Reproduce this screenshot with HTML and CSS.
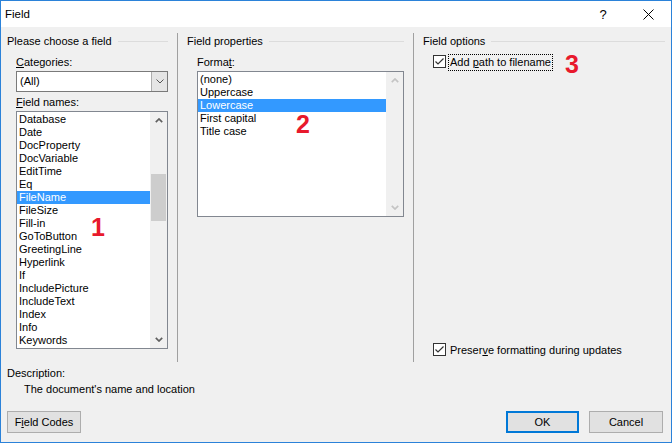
FILE: index.html
```html
<!DOCTYPE html>
<html lang="en">
<head>
<meta charset="utf-8">
<title>Field</title>
<link rel="stylesheet" href="styles.css">
</head>
<body>
<div class="window">
  <div class="titlebar">
    <span class="title">Field</span>
    <span class="cap-btn help">?</span>
    <span class="cap-btn close">
      <svg width="11" height="11" viewBox="0 0 11 11"><path d="M0.5 0.5L10.5 10.5M10.5 0.5L0.5 10.5" stroke="#000" stroke-width="1" fill="none"/></svg>
    </span>
  </div>
  <div class="main">
    <div class="groups">
      <section class="group g1">
        <div class="ghead">Please choose a field</div>
        <div class="gbody">
          <div class="label lbl-cat"><u>C</u>ategories:</div>
          <div class="combo">
            <span class="combo-text">(All)</span>
            <span class="combo-btn">
              <svg width="8" height="5" viewBox="0 0 8 5"><path d="M0.5 0.5L4 4L7.5 0.5" stroke="#555" stroke-width="1" fill="none"/></svg>
            </span>
          </div>
          <div class="label lbl-names"><u>F</u>ield names:</div>
          <div class="listbox lb1">
            <ul class="items">
              <li>Database</li>
              <li>Date</li>
              <li>DocProperty</li>
              <li>DocVariable</li>
              <li>EditTime</li>
              <li>Eq</li>
              <li class="sel">FileName</li>
              <li>FileSize</li>
              <li>Fill-in</li>
              <li>GoToButton</li>
              <li>GreetingLine</li>
              <li>Hyperlink</li>
              <li>If</li>
              <li>IncludePicture</li>
              <li>IncludeText</li>
              <li>Index</li>
              <li>Info</li>
              <li>Keywords</li>
            </ul>
            <div class="vscroll">
              <div class="sb-btn"><svg width="8" height="5" viewBox="0 0 8 5"><path d="M0.8 4.2L4 1L7.2 4.2" stroke="#606060" stroke-width="1.7" fill="none"/></svg></div>
              <div class="sb-track"><div class="thumb"></div></div>
              <div class="sb-btn"><svg width="8" height="5" viewBox="0 0 8 5"><path d="M0.8 0.8L4 4L7.2 0.8" stroke="#606060" stroke-width="1.7" fill="none"/></svg></div>
            </div>
          </div>
        </div>
      </section>
      <section class="group g2">
        <div class="ghead">Field properties</div>
        <div class="gbody">
          <div class="label lbl-fmt">Forma<u>t</u>:</div>
          <div class="listbox lb2">
            <ul class="items">
              <li>(none)</li>
              <li>Uppercase</li>
              <li class="sel">Lowercase</li>
              <li>First capital</li>
              <li>Title case</li>
            </ul>
            <div class="vscroll">
              <div class="sb-btn"><svg width="8" height="5" viewBox="0 0 8 5"><path d="M0.8 4.2L4 1L7.2 4.2" stroke="#c4c4c4" stroke-width="1.7" fill="none"/></svg></div>
              <div class="sb-track"></div>
              <div class="sb-btn"><svg width="8" height="5" viewBox="0 0 8 5"><path d="M0.8 0.8L4 4L7.2 0.8" stroke="#c4c4c4" stroke-width="1.7" fill="none"/></svg></div>
            </div>
          </div>
        </div>
      </section>
      <section class="group g3">
        <div class="ghead">Field options</div>
        <div class="gbody">
          <div class="check-row row-path">
            <span class="cbox"><svg width="11" height="11" viewBox="0 0 11 11"><path d="M1.5 5.5L4 8L9.5 2.5" stroke="#333" stroke-width="1.2" fill="none"/></svg></span>
            <span class="clabel focus">Add <u>p</u>ath to filename</span>
          </div>
          <div class="check-row row-preserve">
            <span class="cbox"><svg width="11" height="11" viewBox="0 0 11 11"><path d="M1.5 5.5L4 8L9.5 2.5" stroke="#333" stroke-width="1.2" fill="none"/></svg></span>
            <span class="clabel">Preser<u>v</u>e formatting during updates</span>
          </div>
        </div>
      </section>
    </div>
    <div class="desc-label">Description:</div>
    <div class="desc-text">The document's name and location</div>
    <div class="buttons">
      <button class="btn btn-codes">F<u>i</u>eld Codes</button>
      <span class="spacer"></span>
      <button class="btn btn-ok">OK</button>
      <button class="btn btn-cancel">Cancel</button>
    </div>
  </div>
  <span class="mark m1">1</span>
  <span class="mark m2">2</span>
  <span class="mark m3">3</span>
</div>
</body>
</html>
```

FILE: styles.css
```css
* { box-sizing: border-box; }
html, body { margin: 0; padding: 0; }
body {
  width: 672px;
  height: 443px;
  overflow: hidden;
  background: #fff;
  font-family: "Liberation Sans", Arial, sans-serif;
  font-size: 11px;
  color: #000;
}
u { text-decoration: underline; text-underline-offset: 1px; }

.window {
  position: relative;
  width: 672px;
  height: 443px;
  border: 1px solid #2b82d9;
  background: #f0f0f0;
  display: flex;
  flex-direction: column;
}

.titlebar {
  flex: none;
  height: 26px;
  background: #fff;
  display: flex;
  align-items: center;
}
.title { flex: 1; padding-left: 4px; font-size: 11.5px; }
.cap-btn {
  width: 46px;
  height: 26px;
  display: flex;
  align-items: center;
  justify-content: center;
}
.help { font-size: 13px; padding-left: 2px; }

.main {
  flex: 1;
  display: flex;
  flex-direction: column;
  padding: 6px 6px 0 6px;
}

.groups {
  display: flex;
  height: 329px;
}
.group { display: flex; flex-direction: column; height: 329px; }
.g1 { width: 161px; }
.g2 { width: 227px; margin-left: 9px; border-left: 1px solid #a0a0a0; padding-left: 9px; }
.g3 { width: 252px; margin-left: 9px; border-left: 1px solid #a0a0a0; padding-left: 9px; }

.ghead {
  display: flex;
  align-items: center;
  height: 16px;
  white-space: nowrap;
}
.ghead::after {
  content: "";
  flex: 1;
  height: 1px;
  background: #dcdcdc;
  margin-left: 6px;
}

.gbody { flex: 1; display: flex; flex-direction: column; padding-left: 9px; }
.g2 .gbody, .g3 .gbody { padding-left: 10px; }

.label { line-height: 16px; height: 16px; white-space: nowrap; }
.lbl-cat, .lbl-fmt { margin-top: 5px; }
.lbl-names { margin-top: 2px; }

.combo {
  margin-top: 1px;
  height: 21px;
  border: 1px solid #7a7a7a;
  background: #fff;
  display: flex;
}
.combo-text { flex: 1; padding-left: 3px; line-height: 19px; }
.combo-btn {
  width: 16px;
  background: #e5e5e5;
  border-left: 1px solid #adadad;
  display: flex;
  align-items: center;
  justify-content: center;
}

.listbox {
  margin-top: 1px;
  border: 1px solid #828790;
  background: #fff;
  display: flex;
}
.lb1 { height: 238px; }
.lb2 { height: 146px; }

.items {
  list-style: none;
  margin: 0;
  padding: 1px 0 0 0;
  flex: 1;
  overflow: hidden;
}
.items li {
  height: 13px;
  line-height: 13px;
  padding-left: 2px;
  white-space: nowrap;
}
.items li.sel { background: #3399ff; color: #fff; }

.vscroll {
  flex: none;
  width: 17px;
  background: #f0f0f0;
  display: flex;
  flex-direction: column;
}
.sb-btn {
  flex: none;
  height: 17px;
  display: flex;
  align-items: center;
  justify-content: center;
}
.sb-track { flex: 1; }
.thumb {
  margin: 45px 1px 0 1px;
  height: 47px;
  background: #cdcdcd;
}

.check-row { display: flex; align-items: flex-start; }
.row-path { margin-top: 5px; height: 17px; }
.row-preserve { margin-top: auto; margin-bottom: 4px; height: 16px; }
.cbox {
  flex: none;
  width: 13px;
  height: 13px;
  margin-top: 1px;
  border: 1px solid #333;
  background: #fff;
  display: flex;
}
.clabel { line-height: 15px; white-space: nowrap; }
.row-path .clabel { margin-left: 2px; border: 1px dotted #000; padding: 0 1px; }
.row-preserve .clabel { margin-left: 4px; padding-top: 1px; }

.desc-label { margin-top: 3px; line-height: 16px; height: 16px; }
.desc-text { padding-left: 17px; line-height: 16px; height: 16px; }

.buttons { display: flex; margin-top: 14px; }
.spacer { flex: 1; }
.btn {
  height: 22px;
  background: #e1e1e1;
  border: 1px solid #adadad;
  font-family: inherit;
  font-size: 11px;
  color: #000;
  padding: 0;
  margin: 0;
}
.btn-codes { width: 74px; }
.btn-ok { width: 73px; border: 2px solid #0078d7; }
.btn-cancel { width: 74px; margin-left: 10px; margin-right: 2px; }

.mark {
  position: absolute;
  font-family: "Liberation Sans", Arial, sans-serif;
  font-weight: bold;
  font-size: 25px;
  line-height: 25px;
  color: #e8192c;
}
.m1 { left: 90px; top: 214px; }
.m2 { left: 295px; top: 111px; }
.m3 { left: 564px; top: 51px; }
```
